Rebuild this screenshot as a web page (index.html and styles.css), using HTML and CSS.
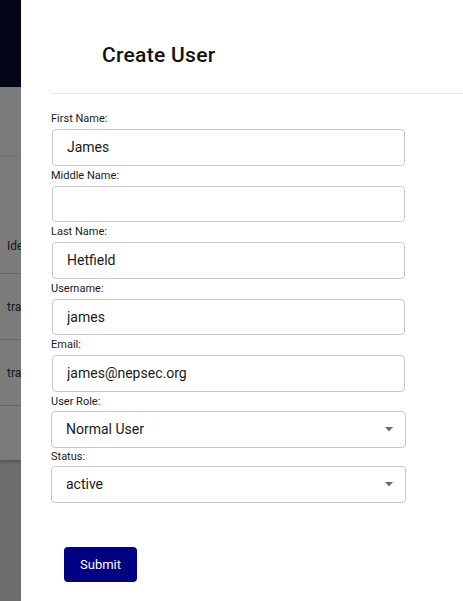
FILE: index.html
```html
<!DOCTYPE html>
<html lang="en">
<head>
<meta charset="utf-8">
<title>Create User</title>
<link rel="stylesheet" href="styles.css">
</head>
<body>
<div class="page">
  <div class="navbar"></div>
  <div class="card">
    <div class="row row-head"></div>
    <div class="row row-tall"><span>Identifier</span></div>
    <div class="row"><span>transaction</span></div>
    <div class="row"><span>transaction</span></div>
    <div class="row row-last"></div>
  </div>
</div>
<div class="overlay"></div>
<aside class="drawer">
  <header class="drawer-header">
    <h1 class="title">Create User</h1>
  </header>
  <form class="form">
    <div class="field">
      <label class="label">First Name:</label>
      <input class="input" type="text" value="James">
    </div>
    <div class="field">
      <label class="label">Middle Name:</label>
      <input class="input" type="text" value="">
    </div>
    <div class="field">
      <label class="label">Last Name:</label>
      <input class="input" type="text" value="Hetfield">
    </div>
    <div class="field">
      <label class="label">Username:</label>
      <input class="input" type="text" value="james">
    </div>
    <div class="field">
      <label class="label">Email:</label>
      <input class="input" type="text" value="james@nepsec.org">
    </div>
    <div class="field field-select">
      <label class="label">User Role:</label>
      <div class="select-wrap">
        <select class="select"><option>Normal User</option></select>
        <svg class="arrow" width="8" height="5" viewBox="0 0 8 5"><path d="M0 0H8L4 4.5Z" fill="#6b6b6b"/></svg>
      </div>
    </div>
    <div class="field field-select field-status">
      <label class="label">Status:</label>
      <div class="select-wrap">
        <select class="select"><option>active</option></select>
        <svg class="arrow" width="8" height="5" viewBox="0 0 8 5"><path d="M0 0H8L4 4.5Z" fill="#6b6b6b"/></svg>
      </div>
    </div>
    <div class="actions">
      <button class="submit" type="button">Submit</button>
    </div>
  </form>
</aside>
</body>
</html>
```
FILE: styles.css
```css
* { box-sizing: border-box; }
html, body { margin: 0; padding: 0; }
body {
  font-family: Roboto, "Noto Sans", "Liberation Sans", sans-serif;
  background: #dcdcdc;
  width: 463px;
  height: 601px;
  overflow: hidden;
}
.page { width: 463px; }
.navbar { height: 87px; background: #08082f; }
.card {
  background: #f7f7f7;
  box-shadow: 0 2px 3px rgba(0,0,0,0.25);
}
.row {
  height: 66px;
  border-bottom: 1px solid #cfcfcf;
  display: flex;
  align-items: center;
  padding-left: 7px;
  font-size: 12px;
  color: #333;
}
.row-head { height: 70px; border-bottom-color: #e4e4e4; }
.row-tall { height: 117px; align-items: flex-start; padding-top: 82px; }
.row-last { height: 54px; border-bottom: none; }
.overlay {
  position: fixed;
  inset: 0;
  background: rgba(0,0,0,0.5);
}
.drawer {
  position: fixed;
  top: 0;
  right: 0;
  bottom: 0;
  width: 442px;
  background: #fff;
  display: flex;
  flex-direction: column;
}
.drawer-header {
  height: 94px;
  margin-left: 30px;
  border-bottom: 1px solid #ececec;
  padding: 42px 0 0 51px;
}
.title {
  margin: 0;
  font-size: 21px;
  line-height: 26px;
  font-weight: 500;
  color: #111;
  letter-spacing: 0.3px;
}
.form {
  padding: 15px 0 0 30px;
  display: flex;
  flex-direction: column;
}
.field { display: flex; flex-direction: column; }
.label {
  height: 20px;
  line-height: 20px;
  font-size: 11px;
  font-weight: 400;
  color: #1a1a1a;
}
.input {
  width: 353px;
  height: 36.5px;
  margin-left: 1px;
  border: 1px solid #c8c8c8;
  border-radius: 4px;
  padding: 0 14px;
  font-family: inherit;
  font-size: 14px;
  color: #1a1a1a;
  background: #fff;
  outline: none;
}
.field-select .label { height: 19px; line-height: 19px; }
.field-status .label { height: 18px; line-height: 18px; }
.select-wrap { position: relative; width: 355px; }
.select {
  width: 355px;
  height: 37px;
  border: 1px solid #c8c8c8;
  border-radius: 4px;
  padding: 0 14px;
  font-family: inherit;
  font-size: 14px;
  color: #1a1a1a;
  background: #fff;
  appearance: none;
  -webkit-appearance: none;
  outline: none;
}
.arrow {
  position: absolute;
  right: 13px;
  top: 16px;
}
.actions { padding: 44px 0 0 13px; }
.submit {
  width: 73px;
  height: 35px;
  background: #000080;
  color: #fff;
  border: none;
  border-radius: 4px;
  font-family: inherit;
  font-size: 13px;
  font-weight: 400;
  padding: 0;
}
```
